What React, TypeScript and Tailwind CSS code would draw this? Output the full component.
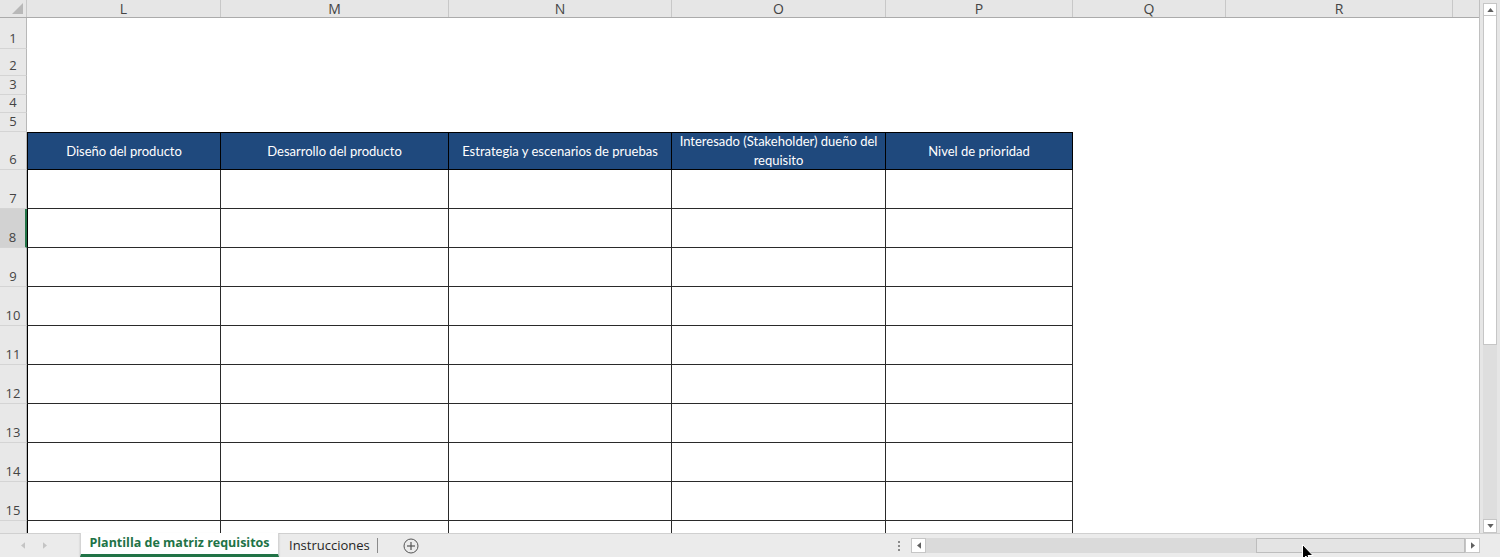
import React from "react";

type Col = { l: string; w: string; table: boolean };

const cols: Col[] = [
  { l: "L", w: "w-[194px]", table: true },
  { l: "M", w: "w-[228px]", table: true },
  { l: "N", w: "w-[223px]", table: true },
  { l: "O", w: "w-[214px]", table: true },
  { l: "P", w: "w-[187px]", table: true },
  { l: "Q", w: "w-[153px]", table: false },
  { l: "R", w: "w-[227px]", table: false },
  { l: "", w: "w-[26px]", table: false },
];

const headers: React.ReactNode[] = [
  "Diseño del producto",
  "Desarrollo del producto",
  "Estrategia y escenarios de pruebas",
  <>
    Interesado (Stakeholder) dueño del
    <br />
    requisito
  </>,
  "Nivel de prioridad",
];

type Row = { n: number; h: string; kind: "empty" | "header" | "data" };

const rows: Row[] = [
  { n: 1, h: "h-[31px]", kind: "empty" },
  { n: 2, h: "h-[27px]", kind: "empty" },
  { n: 3, h: "h-[19px]", kind: "empty" },
  { n: 4, h: "h-[18px]", kind: "empty" },
  { n: 5, h: "h-[19px]", kind: "empty" },
  { n: 6, h: "h-[38px]", kind: "header" },
  ...[7, 8, 9, 10, 11, 12, 13, 14, 15, 16].map(
    (n) => ({ n, h: "h-[39px]", kind: "data" }) as Row
  ),
];

const uiFont = { fontFamily: '"Open Sans", "Noto Sans", sans-serif' };
const cellFont = { fontFamily: 'Lato, "Open Sans", sans-serif' };

function Cell({ row, col, ci }: { row: Row; col: Col; ci: number }) {
  if (row.kind === "header" && col.table) {
    return (
      <div
        className={`${col.w} h-full shrink-0 bg-[#1f497d] border-t border-b border-r border-black ${
          ci === 0 ? "border-l" : ""
        } flex items-center justify-center text-center text-white text-[13px] leading-[19px]`}
        style={cellFont}
      >
        <span>{headers[ci]}</span>
      </div>
    );
  }
  if (row.kind === "data" && col.table) {
    return (
      <div
        className={`${col.w} h-full shrink-0 bg-white border-b border-r border-[#2a2a2a] ${
          ci === 0 ? "border-l border-l-black" : ""
        }`}
      />
    );
  }
  return <div className={`${col.w} h-full shrink-0 bg-white`} />;
}

function RowHeader({ row }: { row: Row }) {
  const sel = row.n === 8;
  return (
    <div
      className={`w-[27px] h-full shrink-0 flex items-end justify-center pb-[2px] border-b border-[#d4d4d4] text-[13px] leading-[16px] text-[#444] ${
        sel
          ? "bg-[#d2d2d2] border-r-2 border-r-[#217346]"
          : "bg-[#e8e8e8] border-r border-r-[#b8b8b8]"
      }`}
      style={uiFont}
    >
      {row.n}
    </div>
  );
}

function Tri({ dir, cls }: { dir: "up" | "down" | "left" | "right"; cls: string }) {
  const pts =
    dir === "up"
      ? "0,5 4,0 8,5"
      : dir === "down"
      ? "0,0 8,0 4,5"
      : dir === "left"
      ? "5,0 5,8 0,4"
      : "0,0 0,8 5,4";
  const vb = dir === "up" || dir === "down" ? "0 0 8 5" : "0 0 5 8";
  const size = dir === "up" || dir === "down" ? "w-[7px] h-[4px]" : "w-[4px] h-[7px]";
  return (
    <svg viewBox={vb} className={`${size} ${cls}`}>
      <polygon points={pts} />
    </svg>
  );
}

export default function App() {
  return (
    <div className="relative w-[1500px] h-[557px] overflow-hidden bg-[#e6e6e6] flex flex-col select-none">
      <div className="flex h-[533px]">
        {/* Grid */}
        <div className="w-[1480px] h-full flex flex-col border-r border-[#c0c0c0] bg-white">
          {/* Column headers */}
          <div className="flex h-[18px] shrink-0 bg-[#e6e6e6] border-b border-[#ababab]">
            <div className="w-[27px] h-full shrink-0 relative border-r border-[#c8c8c8]">
              <svg viewBox="0 0 12 12" className="absolute right-[3px] bottom-[3px] w-[11px] h-[11px]">
                <polygon points="12,0 12,12 0,12" fill="#b8b8b8" />
              </svg>
            </div>
            {cols.map((c, i) => (
              <div
                key={i}
                className={`${c.w} h-full shrink-0 flex items-center justify-center text-[14px] leading-[17px] text-[#444] ${
                  i < cols.length - 1 ? "border-r border-[#c8c8c8]" : ""
                }`}
                style={uiFont}
              >
                {c.l}
              </div>
            ))}
          </div>
          {/* Rows */}
          <div className="flex-1 overflow-hidden flex flex-col">
            {rows.map((r) => (
              <div key={r.n} className={`flex shrink-0 ${r.h}`}>
                <RowHeader row={r} />
                {cols.map((c, ci) => (
                  <Cell key={ci} row={r} col={c} ci={ci} />
                ))}
              </div>
            ))}
          </div>
        </div>
        {/* Vertical scrollbar */}
        <div className="w-[20px] h-full flex flex-col items-center pt-[3px] bg-[#e6e6e6]">
          <div className="w-[14px] h-[13px] bg-white border border-[#c6c6c6] flex items-center justify-center">
            <Tri dir="up" cls="fill-[#606060]" />
          </div>
          <div className="w-[14px] h-[329px] bg-white border-x border-b border-[#c6c6c6]" />
          <div className="w-[14px] flex-1 bg-[#dedede]" />
          <div className="w-[14px] h-[14px] bg-white border border-[#c6c6c6] flex items-center justify-center">
            <Tri dir="down" cls="fill-[#606060]" />
          </div>
        </div>
      </div>
      {/* Sheet tab bar */}
      <div className="h-[24px] flex items-stretch bg-[#ebebeb] border-t border-[#d0d0d0]" style={uiFont}>
        <div className="w-[80px] flex items-center">
          <div className="ml-[21px]">
            <Tri dir="left" cls="fill-[#c4c4c4]" />
          </div>
          <div className="ml-[18px]">
            <Tri dir="right" cls="fill-[#c4c4c4]" />
          </div>
        </div>
        <div className="w-[199px] -mt-[1px] bg-white border-x border-[#d4d4d4] border-b-[3px] border-b-[#217346] flex items-center justify-center text-[12.5px] font-bold text-[#217346] shadow-[0_1px_2px_rgba(0,0,0,0.15)]">
          Plantilla de matriz requisitos
        </div>
        <div className="w-[99px] flex items-center">
          <span className="ml-[10px] text-[13px] text-[#262626]">Instrucciones</span>
          <span className="ml-auto w-px h-[15px] bg-[#8a8a8a]" />
        </div>
        <div className="w-[66px] flex items-center justify-center">
          <svg viewBox="0 0 16 16" className="w-[16px] h-[16px]">
            <circle cx="8" cy="8" r="7" fill="none" stroke="#555" strokeWidth="1" />
            <line x1="8" y1="4" x2="8" y2="12" stroke="#555" strokeWidth="1.2" />
            <line x1="4" y1="8" x2="12" y2="8" stroke="#555" strokeWidth="1.2" />
          </svg>
        </div>
        <div className="flex-1" />
        {/* splitter dots */}
        <div className="w-[13px] mr-[6px] flex flex-col items-center justify-center gap-[2px]">
          <span className="w-[2px] h-[2px] bg-[#8a8a8a]" />
          <span className="w-[2px] h-[2px] bg-[#8a8a8a]" />
          <span className="w-[2px] h-[2px] bg-[#8a8a8a]" />
        </div>
        {/* Horizontal scrollbar */}
        <div className="w-[569px] flex items-center">
          <div className="w-[15px] h-[15px] bg-white border border-[#c6c6c6] flex items-center justify-center">
            <Tri dir="left" cls="fill-[#606060]" />
          </div>
          <div className="w-[330px] h-[15px] bg-[#dadada]" />
          <div className="w-[209px] h-[15px] bg-[#e4e4e4] border border-[#bdbdbd]" />
          <div className="w-[15px] h-[15px] bg-white border border-[#c6c6c6] flex items-center justify-center">
            <Tri dir="right" cls="fill-[#606060]" />
          </div>
        </div>
        <div className="w-[20px]" />
      </div>
      {/* Mouse cursor */}
      <svg
        viewBox="0 0 12 19"
        className="absolute left-[1302px] top-[544px] w-[12px] h-[19px]"
      >
        <path d="M0.5 0.5 L0.5 15.5 L4 12 L6.5 18 L8.5 17 L6 11.5 L11 11.5 Z" fill="#000" stroke="#fff" strokeWidth="1" />
      </svg>
    </div>
  );
}
